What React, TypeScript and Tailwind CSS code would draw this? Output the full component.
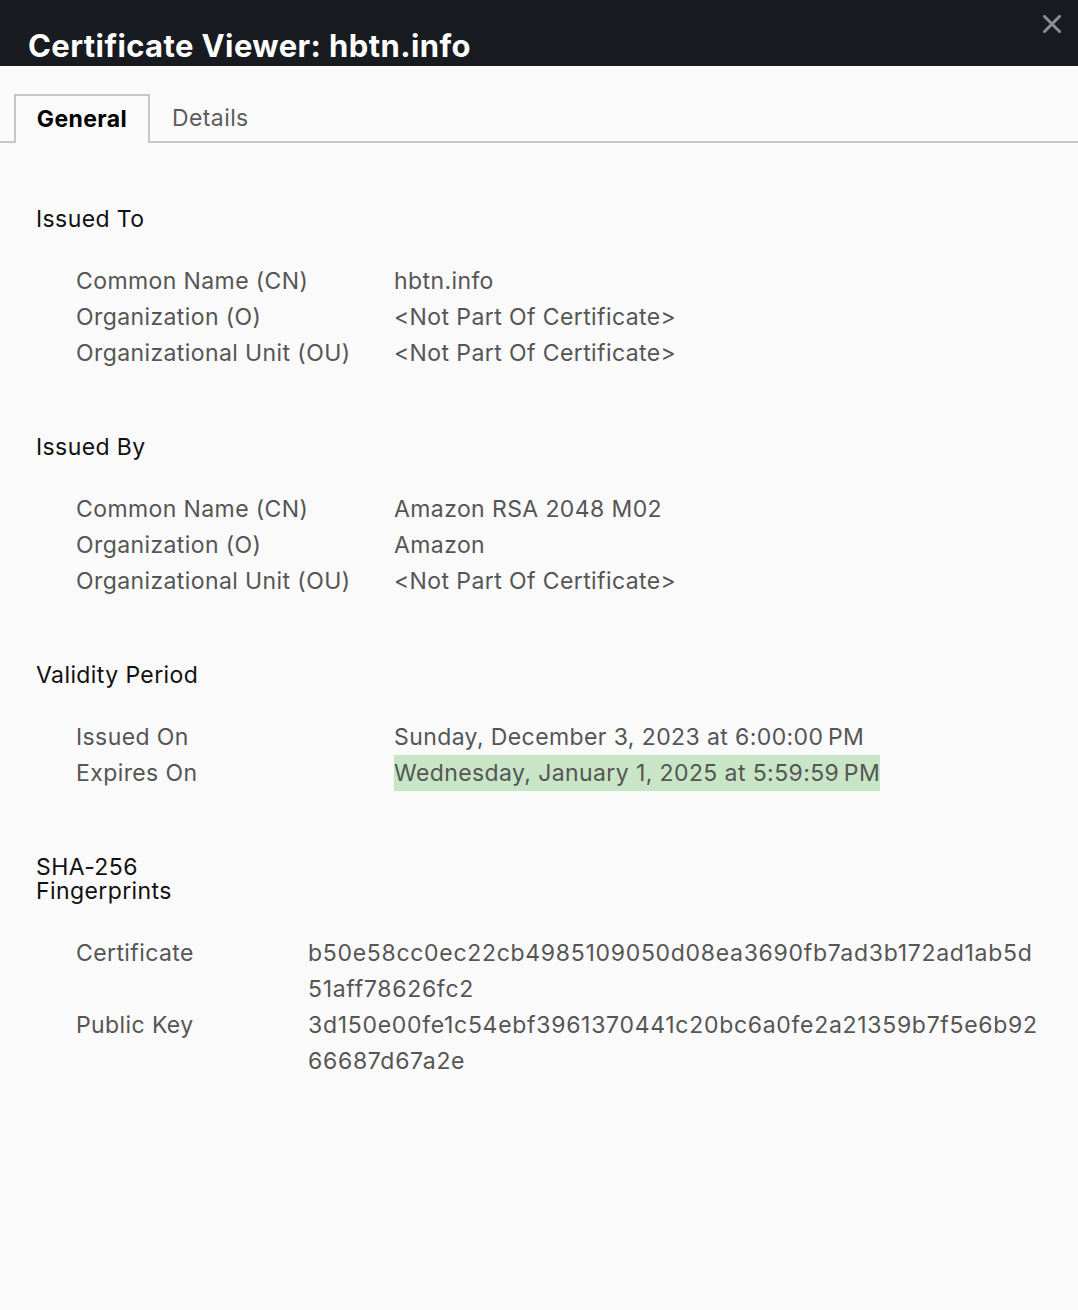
import React from "react";

type Row = { label: string; value: string[]; highlight?: boolean };

const sections: { title: React.ReactNode; cols: string; mono?: boolean; rows: Row[] }[] = [
  {
    title: "Issued To",
    cols: "grid-cols-[318px_1fr]",
    rows: [
      { label: "Common Name (CN)", value: ["hbtn.info"] },
      { label: "Organization (O)", value: ["<Not Part Of Certificate>"] },
      { label: "Organizational Unit (OU)", value: ["<Not Part Of Certificate>"] },
    ],
  },
  {
    title: "Issued By",
    cols: "grid-cols-[318px_1fr]",
    rows: [
      { label: "Common Name (CN)", value: ["Amazon RSA 2048 M02"] },
      { label: "Organization (O)", value: ["Amazon"] },
      { label: "Organizational Unit (OU)", value: ["<Not Part Of Certificate>"] },
    ],
  },
  {
    title: "Validity Period",
    cols: "grid-cols-[318px_1fr]",
    rows: [
      { label: "Issued On", value: ["Sunday, December 3, 2023 at 6:00:00\u202fPM"] },
      { label: "Expires On", value: ["Wednesday, January 1, 2025 at 5:59:59\u202fPM"], highlight: true },
    ],
  },
  {
    title: (
      <>
        SHA-256
        <br />
        Fingerprints
      </>
    ),
    cols: "grid-cols-[232px_1fr]",
    mono: true,
    rows: [
      {
        label: "Certificate",
        value: ["b50e58cc0ec22cb4985109050d08ea3690fb7ad3b172ad1ab5d", "51aff78626fc2"],
      },
      {
        label: "Public Key",
        value: ["3d150e00fe1c54ebf3961370441c20bc6a0fe2a21359b7f5e6b92", "66687d67a2e"],
      },
    ],
  },
];

export default function App() {
  return (
    <div className="min-h-[1310px] bg-[#fafafa] font-['Inter','Noto_Sans',sans-serif] tracking-[0.4px]">
      <header className="relative h-[66px] bg-[#181b1f] pl-[28px] pt-[28px]">
        <h1 className="text-[31px] font-bold leading-[36px] text-white">Certificate Viewer: hbtn.info</h1>
        <button className="absolute right-[16px] top-[14px] flex h-[20px] w-[20px] items-center justify-center" aria-label="Close">
          <svg width="18" height="18" viewBox="0 0 18 18" fill="none">
            <path d="M1.5 1.5L16.5 16.5M16.5 1.5L1.5 16.5" stroke="#8b8e93" strokeWidth="3" strokeLinecap="square" />
          </svg>
        </button>
      </header>

      <nav className="mt-[28px] flex border-b-2 border-[#c6c6c6] pl-[14px]">
        <div className="-mb-[2px] flex h-[49px] w-[136px] items-center justify-center border-2 border-b-0 border-[#c6c6c6] bg-[#fafafa] text-[23px] font-bold text-black">
          General
        </div>
        <div className="flex h-[47px] items-center pl-[22px] pt-[2px] text-[23px] text-[#5c5c5c]">Details</div>
      </nav>

      <main className="flex flex-col gap-[64px] px-[36px] pt-[64px]">
        {sections.map((s, i) => (
          <section key={i} className="flex flex-col gap-[32px]">
            <h2 className="text-[23px] leading-[24px] text-[#111]">{s.title}</h2>
            <div className={`grid ${s.cols} pl-[40px] text-[23px] leading-[36px] text-[#555]`}>
              {s.rows.map((r) => (
                <React.Fragment key={r.label}>
                  <div className="whitespace-nowrap">{r.label}</div>
                  <div className={s.mono ? "tracking-[0.7px]" : ""}>
                    {r.value.map((v) => (
                      <div key={v} className={r.highlight ? "inline-block bg-[#c8e6c5]" : "whitespace-nowrap"}>
                        {v}
                      </div>
                    ))}
                  </div>
                </React.Fragment>
              ))}
            </div>
          </section>
        ))}
      </main>
    </div>
  );
}
